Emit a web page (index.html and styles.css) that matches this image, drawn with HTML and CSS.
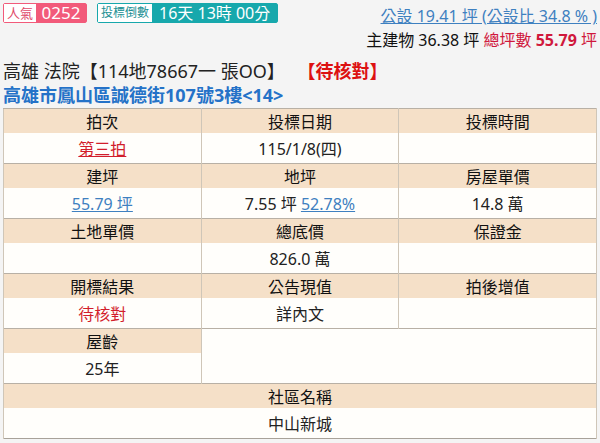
FILE: index.html
```html
<!DOCTYPE html>
<html lang="zh-Hant">
<head>
<meta charset="utf-8">
<link rel="stylesheet" href="styles.css">
</head>
<body>
<div class="page">
  <div class="top">
    <div class="badges">
      <span class="badge pink"><span class="lbl">人氣</span><span class="val">0252</span></span>
      <span class="badge teal"><span class="lbl">投標倒數</span><span class="val">16天 13時 00分</span></span>
    </div>
    <div class="info">
      <div class="line1"><a class="link">公設 19.41 坪 (公設比 34.8 % )</a></div>
      <div class="line2">主建物 36.38 坪 <span class="total">總坪數 <b>55.79</b> 坪</span></div>
    </div>
  </div>
  <div class="title">高雄 法院【114地78667一 張OO】 <span class="status">【待核對】</span></div>
  <div class="addr">高雄市鳳山區誠德街107號3樓&lt;14&gt;</div>
  <table class="grid">
    <colgroup><col class="c"><col class="c"><col class="c"></colgroup>
    <tr class="h"><td>拍次</td><td>投標日期</td><td>投標時間</td></tr>
    <tr class="v"><td><a class="red ul">第三拍</a></td><td>115/1/8(四)</td><td></td></tr>
    <tr class="h"><td>建坪</td><td>地坪</td><td>房屋單價</td></tr>
    <tr class="v"><td><a class="blue ul">55.79 坪</a></td><td>7.55 坪 <a class="blue ul">52.78%</a></td><td>14.8 萬</td></tr>
    <tr class="h"><td>土地單價</td><td>總底價</td><td>保證金</td></tr>
    <tr class="v"><td></td><td>826.0 萬</td><td></td></tr>
    <tr class="h"><td>開標結果</td><td>公告現值</td><td>拍後增值</td></tr>
    <tr class="v"><td><span class="red">待核對</span></td><td>詳內文</td><td></td></tr>
    <tr class="h"><td>屋齡</td><td class="blank" colspan="2" rowspan="2"></td></tr>
    <tr class="v"><td>25年</td></tr>
    <tr class="h"><td colspan="3">社區名稱</td></tr>
    <tr class="v"><td colspan="3">中山新城</td></tr>
  </table>
  <div class="next"></div>
</div>
</body>
</html>
```

FILE: styles.css
```css
html, body {
  margin: 0;
  padding: 0;
  background: #f4f4f4;
}
body {
  font-family: "Noto Sans", "Noto Sans CJK TC", sans-serif;
  color: #222;
  font-size: 16px;
}
.page {
  padding: 3px 3px 0 3px;
  width: 594px;
  overflow: hidden;
  height: 440px;
}
.top {
  display: flex;
  justify-content: space-between;
  align-items: flex-start;
}
.badges {
  display: flex;
  gap: 10px;
  flex-shrink: 0;
}
.badge {
  display: inline-flex;
  align-items: center;
  height: 20px;
  box-sizing: border-box;
  border-radius: 2px;
  white-space: nowrap;
  flex-shrink: 0;
}
.badge .lbl {
  background: #fff;
  font-size: 12px;
  padding: 0 3px;
  height: 18px;
  line-height: 18px;
  white-space: nowrap;
  flex-shrink: 0;
}
.badge .val {
  color: #fff;
  font-size: 17px;
  height: 18px;
  line-height: 18px;
  white-space: nowrap;
  flex-shrink: 0;
}
.pink { border: 1px solid #f25a7a; }
.pink .lbl { color: #e04a6a; font-size: 13px; }
.pink .val { background: #f25a7a; width: 50px; text-align: center; }
.teal { border: 1px solid #17a8ac; }
.teal .lbl { color: #1a8f93; }
.teal .val { background: #17a8ac; padding: 0 7px; font-size: 16px; }
.info {
  text-align: right;
  white-space: nowrap;
}
.line1 {
  font-size: 16px;
  line-height: 22px;
  margin-top: 2px;
}
.link {
  color: #3e80c0;
  text-decoration: underline;
}
.line2 {
  font-size: 16px;
  line-height: 26px;
  color: #111;
}
.total {
  color: #d0183c;
}
.total b {
  font-weight: 700;
}
.title {
  margin-top: 6px;
  font-size: 18px;
  line-height: 24px;
  color: #222;
}
.status {
  color: #dd1111;
  font-weight: 700;
  margin-left: 8px;
}
.addr {
  font-size: 18px;
  line-height: 24px;
  font-weight: 700;
  color: #2472c8;
}
.grid {
  margin-top: 1px;
  width: 594px;
  border-collapse: collapse;
  table-layout: fixed;
  border: 1px solid #a8a299;
  font-size: 16px;
}
.grid td {
  text-align: center;
  padding: 0;
  border-left: 1px solid #cfc6b8;
  border-right: 1px solid #cfc6b8;
}
.grid tr.h td {
  background: #f5e0c8;
  height: 23px;
  color: #111;
  border-top: 1px solid #b8b0a5;
}
.grid tr.v td {
  background: #fffefb;
  height: 30px;
  color: #222;
}
.grid td.blank {
  background: #fffefb !important;
}
.red { color: #d21e2c; }
.blue { color: #3e80c0; }
.ul { text-decoration: underline; }
.next {
  margin-top: 5px;
  height: 4px;
  border-top: 1px solid #a8a299;
  border-left: 1px solid #a8a299;
  border-right: 1px solid #a8a299;
  background: #fffefb;
}
```
